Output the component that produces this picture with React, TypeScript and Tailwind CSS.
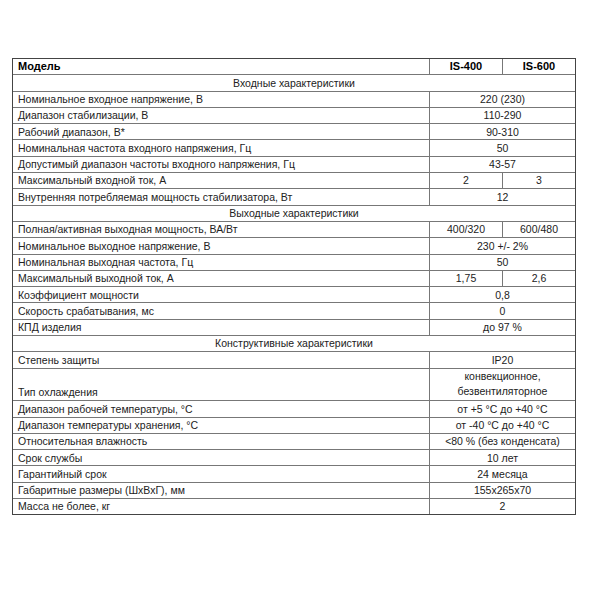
import React from 'react'

type Row =
  | { kind: 'section'; title: string }
  | { kind: 'row'; label: string; values: string[]; tall?: boolean }

const rows: Row[] = [
  { kind: 'section', title: 'Входные характеристики' },
  { kind: 'row', label: 'Номинальное входное напряжение, В', values: ['220 (230)'] },
  { kind: 'row', label: 'Диапазон стабилизации, В', values: ['110-290'] },
  { kind: 'row', label: 'Рабочий диапазон, В*', values: ['90-310'] },
  { kind: 'row', label: 'Номинальная частота входного напряжения, Гц', values: ['50'] },
  { kind: 'row', label: 'Допустимый диапазон частоты входного напряжения, Гц', values: ['43-57'] },
  { kind: 'row', label: 'Максимальный входной ток, А', values: ['2', '3'] },
  { kind: 'row', label: 'Внутренняя потребляемая мощность стабилизатора, Вт', values: ['12'] },
  { kind: 'section', title: 'Выходные характеристики' },
  { kind: 'row', label: 'Полная/активная выходная мощность, ВА/Вт', values: ['400/320', '600/480'] },
  { kind: 'row', label: 'Номинальное выходное напряжение, В', values: ['230 +/- 2%'] },
  { kind: 'row', label: 'Номинальная выходная частота, Гц', values: ['50'] },
  { kind: 'row', label: 'Максимальный выходной ток, А', values: ['1,75', '2,6'] },
  { kind: 'row', label: 'Коэффициент мощности', values: ['0,8'] },
  { kind: 'row', label: 'Скорость срабатывания, мс', values: ['0'] },
  { kind: 'row', label: 'КПД изделия', values: ['до 97 %'] },
  { kind: 'section', title: 'Конструктивные характеристики' },
  { kind: 'row', label: 'Степень защиты', values: ['IP20'] },
  { kind: 'row', label: 'Тип охлаждения', values: ['конвекционное,\nбезвентиляторное'], tall: true },
  { kind: 'row', label: 'Диапазон рабочей температуры, °C', values: ['от +5 °C до +40 °C'] },
  { kind: 'row', label: 'Диапазон температуры хранения, °C', values: ['от -40 °C до +40 °C'] },
  { kind: 'row', label: 'Относительная влажность', values: ['<80 % (без конденсата)'] },
  { kind: 'row', label: 'Срок службы', values: ['10 лет'] },
  { kind: 'row', label: 'Гарантийный срок', values: ['24 месяца'] },
  { kind: 'row', label: 'Габаритные размеры (ШхВхГ), мм', values: ['155x265x70'] },
  { kind: 'row', label: 'Масса не более, кг', values: ['2'] },
]

const cell = 'bg-white flex items-center'

const App: React.FC = () => {
  return (
    <div className="min-h-screen bg-white pt-[58px] pl-[12px] text-[#222] text-[10.5px] leading-none font-['Liberation_Sans',Arial,sans-serif]">
      <div className="grid w-[564px] grid-cols-[416px_72px_72px] auto-rows-[15.3px] gap-px border border-[#444] bg-[#777]">
        {/* header */}
        <div className={`${cell} pl-[5px] font-bold text-black text-[11px]`}>Модель</div>
        <div className={`${cell} justify-center font-bold text-black text-[11px]`}>IS-400</div>
        <div className={`${cell} justify-center font-bold text-black text-[11px]`}>IS-600</div>

        {rows.map((row, i) => {
          if (row.kind === 'section') {
            return (
              <div key={i} className={`${cell} col-span-3 justify-center`}>
                {row.title}
              </div>
            )
          }
          const span = row.tall ? 'row-span-2' : ''
          return (
            <React.Fragment key={i}>
              <div className={`${cell} ${span} pl-[5px] ${row.tall ? 'items-end pb-[3px]' : ''}`}>{row.label}</div>
              {row.values.length === 1 ? (
                <div className={`${cell} ${span} col-span-2 justify-center text-center whitespace-pre-line ${row.tall ? 'leading-[15px]' : ''}`}>
                  {row.values[0]}
                </div>
              ) : (
                row.values.map((v, j) => (
                  <div key={j} className={`${cell} justify-center`}>
                    {v}
                  </div>
                ))
              )}
            </React.Fragment>
          )
        })}
      </div>
    </div>
  )
}

export default App
